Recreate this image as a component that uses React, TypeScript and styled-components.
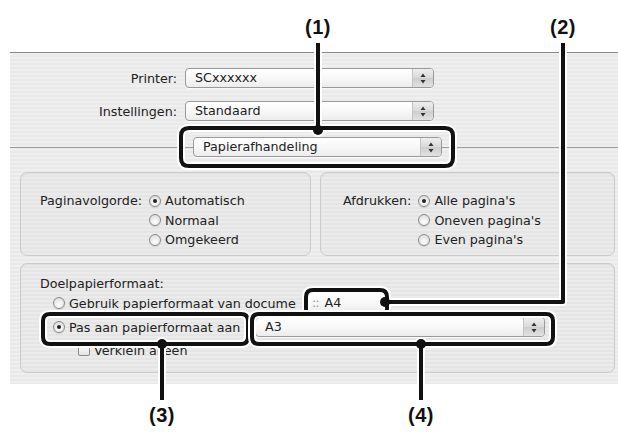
import React from 'react'
import styled, { createGlobalStyle } from 'styled-components'

const GlobalStyle = createGlobalStyle`
    html, body {
        margin: 0;
        padding: 0;
        background: #ffffff;
    }
    body {
        font-family: 'DejaVu Sans', 'Liberation Sans', sans-serif;
        font-size: 12.7px;
        color: #222222;
    }
`

const Page = styled.div`
    position: relative;
    width: 618px;
    height: 436px;
    overflow: hidden;
    background: #ffffff;
`

const Panel = styled.div`
    box-sizing: border-box;
    margin: 52px 0 0 10px;
    width: 608px;
    height: 332px;
    padding: 15px 3px 0 10px;
    border-top: 1px solid #8a8a8a;
    background: repeating-linear-gradient(
        to bottom,
        #efefef 0 2px,
        #e9e9e9 2px 4px
    );
    display: flex;
    flex-direction: column;
`

const FieldRow = styled.div<{ $top?: number }>`
    display: flex;
    align-items: center;
    height: 20px;
    margin-top: ${(p) => p.$top ?? 0}px;
`

const FieldLabel = styled.div`
    width: 175px;
    margin-left: -10px;
    padding-right: 8px;
    box-sizing: border-box;
    text-align: right;
    white-space: nowrap;
`

const DividerRow = styled.div`
    position: relative;
    display: flex;
    align-items: center;
    height: 20px;
    margin: 16px -3px 0 -10px;
    padding-left: 183px;

    &::before {
        content: '';
        position: absolute;
        left: 0;
        right: 0;
        top: 10px;
        border-top: 1px solid #9c9c9c;
    }
`

const PopupBox = styled.div<{ $w: number }>`
    position: relative;
    box-sizing: border-box;
    width: ${(p) => p.$w}px;
    height: 20px;
    flex: none;
    display: flex;
    border: 1px solid #9a9a9a;
    border-radius: 4px;
    background: linear-gradient(#ffffff, #f7f7f7 55%, #ececec);
    box-shadow: 0 1px 0 rgba(255, 255, 255, 0.7);
    overflow: hidden;
`

const PopupText = styled.div`
    flex: 1;
    padding-left: 9px;
    line-height: 18px;
    white-space: nowrap;
    overflow: hidden;
`

const Grip = styled.span`
    color: #9a9a9a;
    margin: 0 6px 0 -5px;
    letter-spacing: -1px;
`

const PopupArrows = styled.div`
    width: 20px;
    border-left: 1px solid #c4c4c4;
    background: linear-gradient(#eeeeee, #d9d9d9 50%, #cdcdcd 51%, #e2e2e2);
    display: flex;
    align-items: center;
    justify-content: center;
`

const Popup: React.FC<{ width: number; label: string; grip?: boolean; arrows?: boolean }> = ({
    width,
    label,
    grip,
    arrows = true,
}) => (
    <PopupBox $w={width}>
        <PopupText>
            {grip && <Grip>::</Grip>}
            {label}
        </PopupText>
        {arrows && (
            <PopupArrows>
                <svg width="6" height="11" viewBox="0 0 6 11">
                    <path d="M3 0.5 L5.5 4 L0.5 4 Z" fill="#333" />
                    <path d="M3 10.5 L5.5 7 L0.5 7 Z" fill="#333" />
                </svg>
            </PopupArrows>
        )}
    </PopupBox>
)

const Groups = styled.div`
    display: flex;
    gap: 9px;
    margin-top: 15px;
`

const GroupBox = styled.div<{ $w?: number; $h: number; $pl: number; $pt: number; $top?: number }>`
    box-sizing: border-box;
    width: ${(p) => (p.$w ? `${p.$w}px` : 'auto')};
    height: ${(p) => p.$h}px;
    margin-top: ${(p) => p.$top ?? 0}px;
    padding: ${(p) => p.$pt}px 0 0 ${(p) => p.$pl}px;
    border: 1px solid #cbcbcb;
    border-radius: 7px;
    background: repeating-linear-gradient(
        to bottom,
        #ebebeb 0 2px,
        #e5e5e5 2px 4px
    );
    box-shadow: inset 0 1px 1px rgba(0, 0, 0, 0.06);
`

const OptionGrid = styled.div`
    display: grid;
    grid-template-columns: auto auto;
    grid-auto-rows: 19.5px;
    column-gap: 7px;
    align-items: center;
    justify-content: start;
`

const GridLabel = styled.div`
    grid-column: 1;
    white-space: nowrap;
`

const Option = styled.div`
    grid-column: 2;
    display: flex;
    align-items: center;
    gap: 4px;
    white-space: nowrap;
`

const RadioDot = styled.span<{ $on?: boolean }>`
    position: relative;
    box-sizing: border-box;
    width: 12px;
    height: 12px;
    flex: none;
    border-radius: 50%;
    border: 1px solid #8a8a8a;
    background: radial-gradient(circle at 50% 70%, #ffffff, #e2e2e2 70%, #cfcfcf);
    box-shadow: 0 1px 1px rgba(0, 0, 0, 0.12);

    &::after {
        content: '';
        display: ${(p) => (p.$on ? 'block' : 'none')};
        position: absolute;
        left: 3px;
        top: 3px;
        width: 4px;
        height: 4px;
        border-radius: 50%;
        background: #222;
    }
`

const CheckBox = styled.span`
    box-sizing: border-box;
    width: 12px;
    height: 12px;
    flex: none;
    border: 1px solid #8a8a8a;
    border-radius: 2px;
    background: linear-gradient(#ffffff, #e4e4e4);
`

const TargetLabel = styled.div`
    line-height: 15px;
`

const TargetRow = styled.div<{ $top: number; $indent: number }>`
    display: flex;
    align-items: center;
    height: 20px;
    margin-top: ${(p) => p.$top}px;
    margin-left: ${(p) => p.$indent}px;
`

const ChoiceText = styled.div<{ $w?: number; $gap?: number }>`
    width: ${(p) => (p.$w ? `${p.$w}px` : 'auto')};
    margin-left: 4px;
    margin-right: ${(p) => p.$gap ?? 0}px;
    white-space: nowrap;
    flex: none;
`

const Callouts = styled.svg`
    position: absolute;
    left: 0;
    top: 0;
    pointer-events: none;
`

const CalloutLabel = styled.div<{ $x: number; $y: number }>`
    position: absolute;
    left: ${(p) => p.$x - 25}px;
    top: ${(p) => p.$y - 12}px;
    width: 50px;
    text-align: center;
    font-family: 'Liberation Sans', Arial, sans-serif;
    font-weight: bold;
    font-size: 20px;
    line-height: 24px;
    letter-spacing: 0.5px;
    color: #111;
`

const Mark: React.FC<{ d: string; dots: [number, number][] }> = ({ d, dots }) => (
    <g>
        <path d={d} fill="none" stroke="#fff" strokeWidth={8} strokeLinejoin="round" />
        {dots.map(([x, y], i) => (
            <circle key={`h${i}`} cx={x} cy={y} r={7} fill="#fff" />
        ))}
        <path d={d} fill="none" stroke="#111" strokeWidth={4} strokeLinejoin="round" />
        {dots.map(([x, y], i) => (
            <circle key={`d${i}`} cx={x} cy={y} r={5} fill="#111" />
        ))}
    </g>
)

const rr = (x: number, y: number, w: number, h: number, r: number) =>
    `M${x + r} ${y} H${x + w - r} Q${x + w} ${y} ${x + w} ${y + r} V${y + h - r} Q${x + w} ${y + h} ${x + w - r} ${y + h} H${x + r} Q${x} ${y + h} ${x} ${y + h - r} V${y + r} Q${x} ${y} ${x + r} ${y} Z`

export default function App() {
    return (
        <Page>
            <GlobalStyle />
            <Panel>
                <FieldRow>
                    <FieldLabel>Printer:</FieldLabel>
                    <Popup width={249} label="SCxxxxxx" />
                </FieldRow>
                <FieldRow $top={13}>
                    <FieldLabel>Instellingen:</FieldLabel>
                    <Popup width={249} label="Standaard" />
                </FieldRow>
                <DividerRow>
                    <Popup width={249} label="Papierafhandeling" />
                </DividerRow>

                <Groups>
                    <GroupBox $w={291} $h={84} $pl={19} $pt={18}>
                        <OptionGrid>
                            <GridLabel>Paginavolgorde:</GridLabel>
                            <Option>
                                <RadioDot $on />
                                Automatisch
                            </Option>
                            <Option>
                                <RadioDot />
                                Normaal
                            </Option>
                            <Option>
                                <RadioDot />
                                Omgekeerd
                            </Option>
                        </OptionGrid>
                    </GroupBox>
                    <GroupBox $w={295} $h={84} $pl={22} $pt={18}>
                        <OptionGrid>
                            <GridLabel>Afdrukken:</GridLabel>
                            <Option>
                                <RadioDot $on />
                                Alle pagina's
                            </Option>
                            <Option>
                                <RadioDot />
                                Oneven pagina's
                            </Option>
                            <Option>
                                <RadioDot />
                                Even pagina's
                            </Option>
                        </OptionGrid>
                    </GroupBox>
                </Groups>

                <GroupBox $h={110} $pl={19} $pt={12} $top={7}>
                    <TargetLabel>Doelpapierformaat:</TargetLabel>
                    <TargetRow $top={2} $indent={13}>
                        <RadioDot />
                        <ChoiceText $w={233} $gap={5}>Gebruik papierformaat van docume</ChoiceText>
                        <Popup width={80} label="A4" grip arrows={false} />
                    </TargetRow>
                    <TargetRow $top={4} $indent={13}>
                        <RadioDot $on />
                        <ChoiceText $w={186}>Pas aan papierformaat aan</ChoiceText>
                        <Popup width={290} label="A3" />
                    </TargetRow>
                    <TargetRow $top={3} $indent={38}>
                        <CheckBox />
                        <ChoiceText>Verklein alleen</ChoiceText>
                    </TargetRow>
                </GroupBox>
            </Panel>

            <Callouts width={618} height={436} viewBox="0 0 618 436">
                <Mark d={`${rr(306, 290, 81, 26, 7)} M385 302 H563 V43`} dots={[[385, 302]]} />
                <Mark d={`${rr(43, 314, 205, 30, 7)} M162 344 V400`} dots={[[162, 344]]} />
                <Mark d={`${rr(252, 314, 301, 30, 7)} M421 344 V400`} dots={[[421, 344]]} />
                <Mark d={`${rr(181, 128, 272, 38, 8)} M318 130 V43`} dots={[[318, 130]]} />
            </Callouts>
            <CalloutLabel $x={318} $y={27}>(1)</CalloutLabel>
            <CalloutLabel $x={563} $y={27}>(2)</CalloutLabel>
            <CalloutLabel $x={162} $y={415}>(3)</CalloutLabel>
            <CalloutLabel $x={421} $y={415}>(4)</CalloutLabel>
        </Page>
    )
}
